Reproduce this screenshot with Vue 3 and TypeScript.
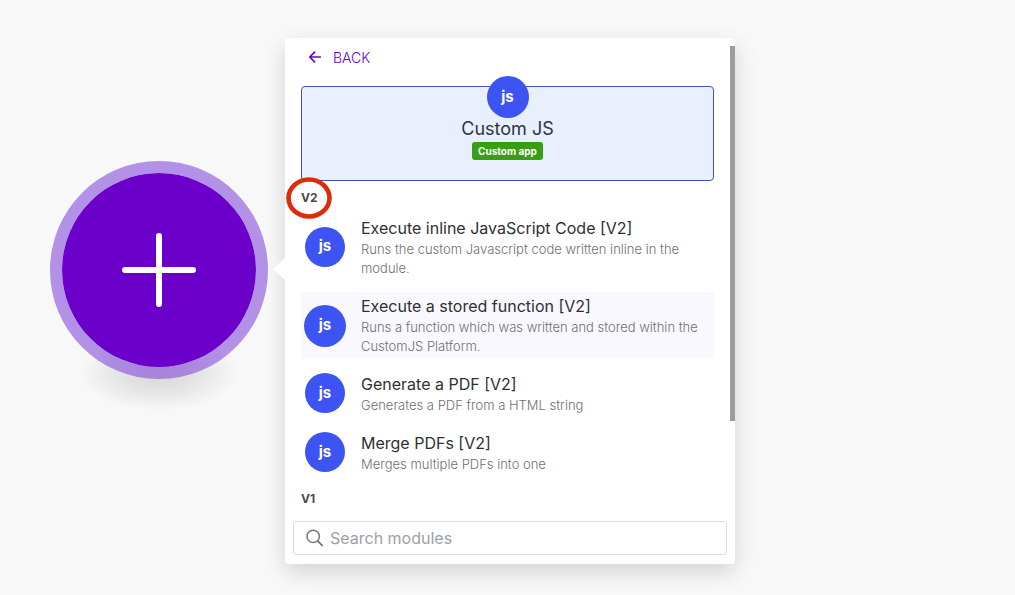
<script setup lang="ts">
import { ref } from 'vue'

interface Module {
  name: string
  description: string
  active?: boolean
}

const query = ref<string>('')

const modules: Module[] = [
  {
    name: 'Execute inline JavaScript Code [V2]',
    description: 'Runs the custom Javascript code written inline in the module.',
  },
  {
    name: 'Execute a stored function [V2]',
    description: 'Runs a function which was written and stored within the CustomJS Platform.',
    active: true,
  },
  { name: 'Generate a PDF [V2]', description: 'Generates a PDF from a HTML string' },
  { name: 'Merge PDFs [V2]', description: 'Merges multiple PDFs into one' },
]
</script>

<template>
  <main class="canvas">
    <div class="node">
      <button class="add" type="button" aria-label="Add module">
        <svg width="74" height="74" viewBox="0 0 74 74" aria-hidden="true">
          <path d="M37 3V71M3 37H71" stroke="#fff" stroke-width="6" stroke-linecap="round" />
        </svg>
      </button>
    </div>

    <section class="panel">
      <div class="scroll">
        <button class="back" type="button">
          <svg width="12" height="12" viewBox="0 0 12 12" fill="none" aria-hidden="true">
            <path d="M11.3 6H1M5.6 1.2L.8 6l4.8 4.8" stroke="currentColor" stroke-width="1.7" stroke-linecap="round" stroke-linejoin="round" />
          </svg>
          <span>BACK</span>
        </button>

        <header class="app">
          <span class="logo large">js</span>
          <h1>Custom JS</h1>
          <span class="tag">Custom app</span>
        </header>

        <h2 class="group">
          <span>V2</span>
          <svg class="marker" width="48" height="44" viewBox="0 0 48 44" fill="none" aria-hidden="true">
            <ellipse cx="24" cy="22" rx="20.5" ry="18.5" fill="#fff" stroke="#dc2c0a" stroke-width="4.6" />
          </svg>
        </h2>

        <ul class="list">
          <li v-for="m in modules" :key="m.name">
            <button class="row" :class="{ active: m.active }" type="button">
              <span class="slot"><span class="logo" :class="{ large: m.active }">js</span></span>
              <span class="text">
                <span class="name">{{ m.name }}</span>
                <span class="desc">{{ m.description }}</span>
              </span>
            </button>
          </li>
        </ul>

        <h2 class="group last">V1</h2>
      </div>

      <label class="search">
        <svg width="18" height="18" viewBox="0 0 18 18" fill="none" aria-hidden="true">
          <circle cx="7.2" cy="7.4" r="6.2" stroke="#74777b" stroke-width="1.5" />
          <path d="M11.6 11.8l5 5" stroke="#74777b" stroke-width="1.8" />
        </svg>
        <input v-model="query" type="text" placeholder="Search modules" aria-label="Search modules" />
      </label>
      <div class="thumb"></div>
    </section>
  </main>
</template>

<style>
body {
  background: #f8f8f8;
}
</style>

<style scoped>
* {
  box-sizing: border-box;
}

.canvas {
  display: flex;
  align-items: flex-start;
  gap: 17px;
  min-height: 100vh;
  padding: 38px 50px 31px;
  background: #f8f8f8;
  font-family: Inter, "Liberation Sans", sans-serif;
}

button {
  border: 0;
  padding: 0;
  background: none;
  font: inherit;
  text-align: left;
  cursor: pointer;
}

.node {
  position: relative;
  flex: none;
  margin-top: 123px;
}

.node::before {
  content: "";
  position: absolute;
  left: 28px;
  right: 28px;
  bottom: -32px;
  height: 76px;
  background: radial-gradient(closest-side, rgba(0, 0, 0, 0.14), rgba(0, 0, 0, 0.07) 55%, rgba(0, 0, 0, 0));
}

.add {
  position: relative;
  display: grid;
  place-items: center;
  width: 218px;
  height: 218px;
  border: 12px solid rgba(134, 76, 218, 0.6);
  border-radius: 50%;
  background: #6a00c9;
  background-clip: padding-box;
}

.panel {
  position: relative;
  flex: 0 1 450px;
  padding: 0 8px 9px;
  border-radius: 4px;
  background: #fff;
  box-shadow: 0 8px 22px rgba(0, 0, 0, 0.15);
}

.panel::before {
  content: "";
  position: absolute;
  left: -12px;
  top: 219px;
  width: 13px;
  height: 24px;
  background: #fff;
  clip-path: polygon(100% 0, 0 50%, 100% 100%);
}

.thumb {
  position: absolute;
  top: 8px;
  right: 0;
  width: 5px;
  height: 375px;
  background: #9d9d9d;
}

.scroll {
  padding: 0 13px 14px 8px;
}

.back {
  display: flex;
  align-items: center;
  gap: 12px;
  height: 38px;
  padding-left: 8px;
  color: #6a00c9;
  font-size: 14px;
  font-weight: 300;
}

.app {
  display: flex;
  flex-direction: column;
  align-items: center;
  height: 95px;
  margin-top: 10px;
  border: 1px solid #4452b8;
  border-radius: 4px;
  background: #e9effd;
}

.app .logo {
  margin-top: -11px;
}

.app h1 {
  margin: 0;
  color: #2f3443;
  font-size: 18px;
  font-weight: 400;
  line-height: 22px;
}

.tag {
  margin-top: 2px;
  padding: 0 6px;
  border-radius: 3px;
  background: #389e13;
  color: #fff;
  font-size: 10px;
  font-weight: 700;
  line-height: 18px;
}

.logo {
  display: grid;
  flex: none;
  place-items: center;
  width: 40px;
  height: 40px;
  padding-bottom: 2px;
  border-radius: 50%;
  background: #3d54f2;
  color: #fff;
  font-size: 15px;
  font-weight: 700;
}

.logo.large {
  width: 42px;
  height: 42px;
}

.group {
  position: relative;
  margin: 9px 0 8px;
  color: #4a4a4a;
  font-size: 12px;
  font-weight: 700;
  line-height: 16px;
}

.group span {
  position: relative;
  z-index: 1;
}

.group.last {
  margin: 15px 0 0;
}

.marker {
  position: absolute;
  left: -16px;
  top: -14px;
}

.list {
  display: grid;
  gap: 12px;
  margin: 0;
  padding: 0;
  list-style: none;
}

.row {
  display: flex;
  align-items: center;
  gap: 12px;
  width: 100%;
  padding: 3px 0 2px;
}

.row.active {
  background: #f9f8ff;
}

.slot {
  display: grid;
  flex: none;
  place-items: center;
  width: 48px;
  height: 42px;
  padding-bottom: 2px;
}

.text {
  display: flex;
  flex-direction: column;
  gap: 1px;
}

.name {
  color: #303030;
  font-size: 16px;
  font-weight: 400;
  line-height: 22px;
}

.desc {
  color: #707070;
  font-size: 13px;
  font-weight: 300;
  line-height: 19px;
}

.search {
  display: flex;
  align-items: center;
  gap: 6px;
  height: 34px;
  padding: 0 12px;
  border: 1px solid #dcdcdc;
  border-radius: 3px;
}

.search input {
  flex: 1;
  min-width: 0;
  padding: 0;
  border: 0;
  outline: 0;
  background: none;
  color: #2b2b2b;
  font: inherit;
  font-size: 16px;
}

.search input::placeholder {
  color: #9ba1a9;
  opacity: 1;
}
</style>
